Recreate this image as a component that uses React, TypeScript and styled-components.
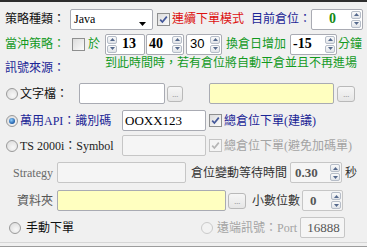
import React from 'react';
import styled, { createGlobalStyle } from 'styled-components';

const RED = '#dd1111';
const GREEN = '#129a1e';
const BLUE = '#1b2596';
const GRAY = '#a3a3a3';

const GlobalStyle = createGlobalStyle`
  html, body { margin: 0; padding: 0; background: #f0f0f0; }
  body { font-family: "Liberation Serif", "Noto Sans CJK TC", serif; font-size: 12px; }
`;

const Panel = styled.div`
  width: 367px;
  height: 247px;
  box-sizing: border-box;
  background: #f0f0f0;
  border-top: 2px solid #2e2e2e;
  display: flex;
  flex-direction: column;
  overflow: hidden;
`;

const Row = styled.div<{ $mt: number; $h: number; $pl?: number; $align?: string }>`
  display: flex;
  align-items: ${(p) => p.$align || 'center'};
  height: ${(p) => p.$h}px;
  margin-top: ${(p) => p.$mt}px;
  padding-left: ${(p) => p.$pl ?? 5}px;
  flex: none;
`;

const Label = styled.span<{ $color?: string; $w?: number; $ml?: number; $right?: boolean; $self?: string; $pr?: number }>`
  font-family: "Liberation Serif", "Noto Sans CJK TC", serif;
  font-size: 12px;
  line-height: 14px;
  color: ${(p) => p.$color || '#111'};
  width: ${(p) => (p.$w ? `${p.$w}px` : 'auto')};
  margin-left: ${(p) => p.$ml ?? 0}px;
  padding-right: ${(p) => p.$pr ?? 0}px;
  text-align: ${(p) => (p.$right ? 'right' : 'left')};
  white-space: nowrap;
  flex: none;
  align-self: ${(p) => p.$self || 'auto'};
  box-sizing: border-box;
`;

const Field = styled.div<{ $w: number; $ml?: number; $bg?: string; $border?: string; $h?: number }>`
  width: ${(p) => p.$w}px;
  height: ${(p) => p.$h ?? 21}px;
  margin-left: ${(p) => p.$ml ?? 0}px;
  box-sizing: border-box;
  border: 1px solid ${(p) => p.$border || '#a9abb3'};
  border-radius: 2px;
  background: ${(p) => p.$bg || '#ffffff'};
  display: flex;
  align-items: center;
  flex: none;
  position: relative;
`;

const FieldText = styled.span<{ $size?: number; $bold?: boolean; $color?: string; $pl?: number; $family?: string; $grow?: boolean; $center?: boolean }>`
  font-family: ${(p) => p.$family || '"Liberation Serif", serif'};
  font-size: ${(p) => p.$size ?? 12}px;
  font-weight: ${(p) => (p.$bold ? 700 : 400)};
  color: ${(p) => p.$color || '#000'};
  padding-left: ${(p) => p.$pl ?? 2}px;
  flex: ${(p) => (p.$grow ? 1 : 'none')};
  text-align: ${(p) => (p.$center ? 'center' : 'left')};
  line-height: 16px;
`;

const ComboArrow = styled.svg`
  position: absolute;
  right: 6px;
  top: 12px;
`;

const DotsButton = styled.div<{ $w?: number; $h?: number; $ml?: number }>`
  width: ${(p) => p.$w ?? 17}px;
  height: ${(p) => p.$h ?? 16}px;
  margin-left: ${(p) => p.$ml ?? 0}px;
  box-sizing: border-box;
  border: 1px solid #b9b9b9;
  border-radius: 3px;
  background: linear-gradient(#f6f6f6, #e6e6e6);
  color: #9a9a9a;
  font-family: "Liberation Sans", sans-serif;
  font-size: 9px;
  line-height: 12px;
  display: flex;
  align-items: center;
  justify-content: center;
  flex: none;
  letter-spacing: -0.5px;
`;

const BoxMark = styled.div<{ $ml?: number; $disabled?: boolean }>`
  width: 13px;
  height: 13px;
  margin-left: ${(p) => p.$ml ?? 0}px;
  box-sizing: border-box;
  border: 1px solid ${(p) => (p.$disabled ? '#c4c4c4' : '#8e8f8f')};
  background: ${(p) => (p.$disabled ? '#f4f4f4' : 'linear-gradient(135deg, #dcdcdc, #fbfbfb)')};
  display: flex;
  align-items: center;
  justify-content: center;
  flex: none;
`;

const RadioMark = styled.div<{ $ml?: number; $disabled?: boolean }>`
  width: 12px;
  height: 12px;
  margin-left: ${(p) => p.$ml ?? 0}px;
  box-sizing: border-box;
  border-radius: 50%;
  border: 1px solid ${(p) => (p.$disabled ? '#cacaca' : '#9a9a9a')};
  background: ${(p) => (p.$disabled ? '#f2f2f2' : 'radial-gradient(circle at 60% 65%, #f8f8f8, #d8d8d8)')};
  display: flex;
  align-items: center;
  justify-content: center;
  flex: none;
`;

const RadioDot = styled.div`
  width: 6px;
  height: 6px;
  border-radius: 50%;
  background: radial-gradient(circle at 40% 35%, #8fd0ff, #1c5aa6 70%);
`;

const SpinCol = styled.div<{ $left?: boolean }>`
  display: flex;
  flex-direction: column;
  gap: 1px;
  width: 10px;
  margin: ${(p) => (p.$left ? '0 0 0 1px' : '0 1px 0 0')};
  flex: none;
`;

const SpinBtn = styled.div`
  height: 8px;
  box-sizing: border-box;
  border: 1px solid #b6bdc8;
  border-radius: 2px;
  background: linear-gradient(#fafafa, #e1e4e9);
  display: flex;
  align-items: center;
  justify-content: center;
`;

const Bottom = styled.div`
  margin-top: auto;
  height: 5px;
  box-sizing: border-box;
  border-top: 1px solid #d6d6d6;
  border-bottom: 1px solid #9c9c9c;
  flex: none;
`;

const Check: React.FC<{ ml?: number; checked?: boolean; disabled?: boolean }> = ({ ml, checked, disabled }) => (
  <BoxMark $ml={ml} $disabled={disabled}>
    {checked && (
      <svg width="9" height="9" viewBox="0 0 9 9">
        <path d="M1.2 4.6 L3.4 7 L7.8 1.6" fill="none" stroke={disabled ? '#b5b5b5' : '#44589a'} strokeWidth="1.7" />
      </svg>
    )}
  </BoxMark>
);

const Radio: React.FC<{ ml?: number; checked?: boolean; disabled?: boolean }> = ({ ml, checked, disabled }) => (
  <RadioMark $ml={ml} $disabled={disabled}>{checked && <RadioDot />}</RadioMark>
);

const Spin: React.FC = () => (
  <>
    <SpinBtn>
      <svg width="5" height="3" viewBox="0 0 5 3"><path d="M0 3 L2.5 0 L5 3 Z" fill="#55698c" /></svg>
    </SpinBtn>
    <SpinBtn>
      <svg width="5" height="3" viewBox="0 0 5 3"><path d="M0 0 L2.5 3 L5 0 Z" fill="#55698c" /></svg>
    </SpinBtn>
  </>
);

type SpinProps = {
  w: number;
  ml?: number;
  value: string;
  bold?: boolean;
  color?: string;
  left?: boolean;
  size?: number;
  family?: string;
  pl?: number;
  bg?: string;
  border?: string;
  center?: boolean;
};

const SpinBox: React.FC<SpinProps> = ({ w, ml, value, bold, color, left, size, family, pl, bg, border, center }) => (
  <Field $w={w} $ml={ml} $bg={bg} $border={border}>
    {left && <SpinCol $left><Spin /></SpinCol>}
    <FieldText $grow $bold={bold} $color={color} $size={size ?? 14} $family={family} $pl={pl} $center={center}>
      {value}
    </FieldText>
    {!left && <SpinCol><Spin /></SpinCol>}
  </Field>
);

export default function App() {
  return (
    <>
      <GlobalStyle />
      <Panel>
        <Row $mt={6} $h={22}>
          <Label $w={65}>策略種類：</Label>
          <Field $w={83}>
            <FieldText $pl={3}>Java</FieldText>
            <ComboArrow width="7" height="4" viewBox="0 0 7 4"><path d="M0 0 L7 0 L3.5 4 Z" fill="#000" /></ComboArrow>
          </Field>
          <Check ml={4} checked />
          <Label $ml={2} $color={RED}>連續下單模式</Label>
          <Label $ml={7} $color={BLUE} $w={60}>目前倉位：</Label>
          <SpinBox w={52} value="0" bold color="#138a13" center />
        </Row>

        <Row $mt={3} $h={22}>
          <Label $w={67} $color={GREEN}>當沖策略：</Label>
          <Check checked={false} />
          <Label $ml={3} $color={GREEN} $w={12}>於</Label>
          <SpinBox ml={5} w={40} value="13" bold left pl={5} />
          <SpinBox ml={1} w={38} value="40" bold />
          <SpinBox ml={2} w={36} value="30" size={13} family={'"Liberation Sans Narrow", "Liberation Sans", sans-serif'} pl={3} />
          <Label $ml={4} $color={GREEN} $w={60}>換倉日增加</Label>
          <SpinBox ml={4} w={47} value="-15" bold pl={2} />
          <Label $ml={1} $color={GREEN}>分鐘</Label>
        </Row>

        <Row $mt={1} $h={19}>
          <Label $w={100} $color={BLUE} $self="flex-end">訊號來源：</Label>
          <Label $color={GREEN} $self="flex-start">到此時間時，若有倉位將自動平倉並且不再進場</Label>
        </Row>

        <Row $mt={8} $h={21} $pl={6}>
          <Radio />
          <Label $ml={2} $w={59}>文字檔：</Label>
          <Field $w={86} />
          <DotsButton $ml={2} $w={16}>...</DotsButton>
          <Field $ml={26} $w={125} $bg="#ffffc0" />
          <DotsButton $ml={3} $w={18}>...</DotsButton>
        </Row>

        <Row $mt={6} $h={21} $pl={6}>
          <Radio checked />
          <Label $ml={2} $w={102} $color={BLUE}>萬用API：識別碼</Label>
          <Field $w={84}>
            <FieldText $size={13} $pl={2}>OOXX123</FieldText>
          </Field>
          <Check ml={3} checked />
          <Label $ml={2} $color={BLUE}>總倉位下單(建議)</Label>
        </Row>

        <Row $mt={4} $h={21} $pl={6}>
          <Radio />
          <Label $ml={2} $w={102} $color="#222">TS 2000i：Symbol</Label>
          <Field $w={84} $bg="#f5f5f5" $border="#c6c6c6" />
          <Check ml={3} checked disabled />
          <Label $ml={2} $color={GRAY}>總倉位下單(避免加碼單)</Label>
        </Row>

        <Row $mt={6} $h={21} $pl={0}>
          <Label $w={55} $right $pr={2} $color="#6a6a6a">Strategy</Label>
          <Field $ml={2} $w={129} $bg="#f5f5f5" $border="#c6c6c6" />
          <Label $ml={5} $color="#333">倉位變動等待時間</Label>
          <SpinBox ml={3} w={52} value="0.30" bold color="#555" size={13} pl={4} bg="#f5f5f5" border="#c6c6c6" />
          <Label $ml={3} $color="#333">秒</Label>
        </Row>

        <Row $mt={7} $h={21} $pl={0}>
          <Label $w={55} $right $pr={2} $color="#555">資料夾</Label>
          <Field $ml={2} $w={169} $bg="#ffffc0" />
          <DotsButton $ml={2} $w={18}>...</DotsButton>
          <Label $ml={6} $color="#333">小數位數</Label>
          <SpinBox ml={2} w={41} value="0" bold color="#555" size={13} pl={7} bg="#f5f5f5" border="#c6c6c6" />
        </Row>

        <Row $mt={6} $h={21} $pl={9}>
          <Radio />
          <Label $ml={5} $w={48}>手動下單</Label>
          <Radio ml={127} disabled />
          <Label $ml={4} $w={83} $color={GRAY}>遠端訊號：Port</Label>
          <Field $w={45} $bg="#f5f5f5" $border="#c6c6c6">
            <FieldText $grow $center $color="#555" $size={13}>16888</FieldText>
          </Field>
        </Row>

        <Bottom />
      </Panel>
    </>
  );
}
